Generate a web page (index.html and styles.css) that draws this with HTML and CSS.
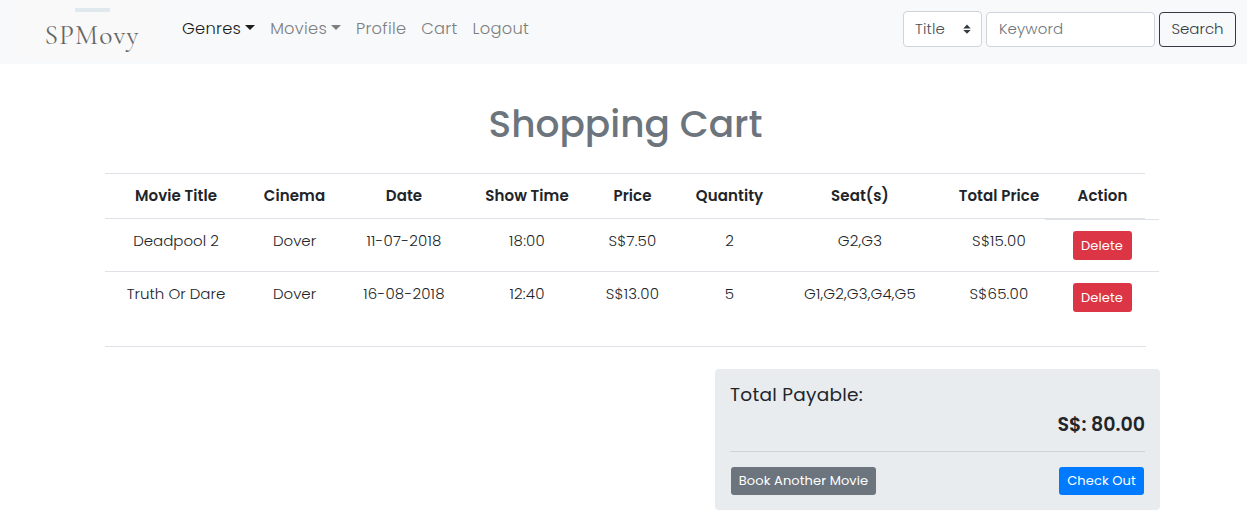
FILE: index.html
```html
<!DOCTYPE html>
<html lang="en">
<head>
<meta charset="utf-8">
<title>SPMovy - Shopping Cart</title>
<link rel="stylesheet" href="styles.css">
</head>
<body>
<nav class="navbar">
  <a class="brand"><span class="brand-bar"></span><span class="brand-name">SPMovy</span></a>
  <div class="nav-links">
    <a class="nav-link active dropdown">Genres</a>
    <a class="nav-link dropdown">Movies</a>
    <a class="nav-link">Profile</a>
    <a class="nav-link">Cart</a>
    <a class="nav-link">Logout</a>
  </div>
  <form class="search">
    <div class="select"><span>Title</span><svg width="8" height="10" viewBox="0 0 8 10"><path fill="#343a40" d="M4 0.5 0.3 4.4h7.4zM4 9.8 0.3 5.9h7.4z"/></svg></div>
    <div class="input"><span>Keyword</span></div>
    <div class="btn-search"><span>Search</span></div>
  </form>
</nav>
<main class="container">
  <h1 class="title">Shopping Cart</h1>
  <section class="cart">
    <div class="row head">
      <span>Movie Title</span><span>Cinema</span><span>Date</span><span>Show Time</span><span>Price</span><span>Quantity</span><span>Seat(s)</span><span>Total Price</span><span>Action</span>
    </div>
    <div class="row item first">
      <span>Deadpool 2</span><span>Dover</span><span class="num">11-07-2018</span><span class="num">18:00</span><span class="num">S$7.50</span><span>2</span><span class="num">G2,G3</span><span class="num">S$15.00</span>
      <div class="action"><a class="btn danger">Delete</a></div>
    </div>
    <div class="row item last">
      <span>Truth Or Dare</span><span>Dover</span><span class="num">16-08-2018</span><span class="num">12:40</span><span class="num">S$13.00</span><span>5</span><span class="num">G1,G2,G3,G4,G5</span><span class="num">S$65.00</span>
      <div class="action"><a class="btn danger">Delete</a></div>
    </div>
  </section>
  <aside class="summary">
    <div class="summary-label">Total Payable:</div>
    <div class="summary-total">S$: 80.00</div>
    <div class="summary-actions">
      <a class="btn secondary">Book Another Movie</a>
      <a class="btn primary">Check Out</a>
    </div>
  </aside>
</main>
</body>
</html>
```
FILE: styles.css
```css
* { box-sizing: border-box; }
body {
  margin: 0;
  background: #fff;
  color: #212529;
  font-family: Poppins, Inter, "Open Sans", sans-serif;
  font-size: 15px;
  font-weight: 300;
  white-space: nowrap;
}
.navbar {
  display: flex;
  height: 64px;
  padding: 0 11px 0 18px;
  background: #f8f9fa;
}
.brand {
  display: flex;
  flex-direction: column;
  align-items: center;
  width: 148px;
  height: 60px;
  padding-top: 8px;
  background: #f9f9f9;
}
.brand-bar { width: 35px; height: 4px; background: #e0e9ee; }
.brand-name {
  margin-top: 8px;
  font: 27.5px/32px "Cormorant Garamond", Cormorant, "Liberation Serif", serif;
  letter-spacing: 1.1px;
  color: #666;
}
.nav-links {
  display: flex;
  align-items: flex-start;
  gap: 15px;
  margin-left: 16px;
  padding-top: 16px;
  line-height: 25px;
  font-size: 16.3px;
  letter-spacing: 0.27px;
}
.nav-link { color: #7d7e7f; }
.active { color: #1b1c1c; }
.dropdown { display: flex; align-items: center; }
.dropdown::after {
  content: "";
  margin-left: 4px;
  margin-bottom: 2px;
  border: 5px solid transparent;
  border-top-color: currentColor;
  border-bottom: 0;
}
.search {
  display: flex;
  gap: 4px;
  margin-left: auto;
  padding-top: 11px;
  color: #495057;
}
.select, .input {
  display: flex;
  align-items: center;
  border: 1px solid #ced4da;
  border-radius: 4px;
  background: #fff;
}
.select { justify-content: space-between; width: 79px; height: 36px; padding: 0 10px 0 11px; letter-spacing: 0.1px; }
.select span { padding-bottom: 2px; }
.input { width: 169px; height: 35px; margin-top: 1px; padding: 0 12px 2px; color: #6c757d; letter-spacing: 0.1px; }
.btn-search {
  width: 77px;
  height: 35px;
  margin-top: 1px;
  border: 1px solid #343a40;
  border-radius: 4px;
  line-height: 31px;
  text-align: center;
  color: #343a40;
}
.container { width: 1055px; margin-left: 105px; }
.title {
  margin: 36px 15px 25px 0;
  height: 48px;
  padding-left: 1px;
  line-height: 48px;
  font-size: 37.5px;
  font-weight: 500;
  text-align: center;
  color: #6c757d;
}
.cart { width: 1040px; }
.row {
  display: grid;
  grid-template-columns: 142px 95px 124px 122px 89px 105px 156px 122px 85px;
  border-top: 1px solid #dee2e6;
  line-height: 44px;
  text-align: center;
}
.head { height: 45px; font-weight: 600; letter-spacing: 0.1px; }
.num { letter-spacing: 0.2px; }
.first { height: 53px; }
.last { height: 76px; width: 1041px; border-bottom: 1px solid #dee2e6; }
.action {
  display: flex;
  justify-content: center;
  height: 29px;
  margin: 0 -14px 0 -15px;
  border-top: 1px solid #dee2e6;
  padding-top: 11px;
}
.last .action { margin-top: -1px; }
.btn {
  flex: none;
  height: 29px;
  border-radius: 3px;
  line-height: 29px;
  font-size: 13px;
  font-weight: 400;
  letter-spacing: 0.1px;
  text-align: center;
  color: #fff;
}
.danger { width: 59px; background: #dc3545; }
.secondary { width: 145px; background: #6c757d; }
.primary { width: 85px; background: #007bff; }
.summary {
  width: 445px;
  height: 141px;
  margin: 22px 0 0 auto;
  border-radius: 4px;
  padding: 11px 15px 0;
  background: #e9ecef;
}
.summary-label { line-height: 29px; font-size: 18.5px; letter-spacing: 0.27px; font-weight: 400; }
.summary-total { line-height: 31px; font-size: 19px; font-weight: 600; text-align: right; }
.summary-actions {
  display: flex;
  justify-content: space-between;
  margin-top: 11px;
  border-top: 1px solid #d0d3d6;
  padding: 15px 1px 0;
}
.summary-actions .btn { height: 28px; line-height: 28px; }
```
